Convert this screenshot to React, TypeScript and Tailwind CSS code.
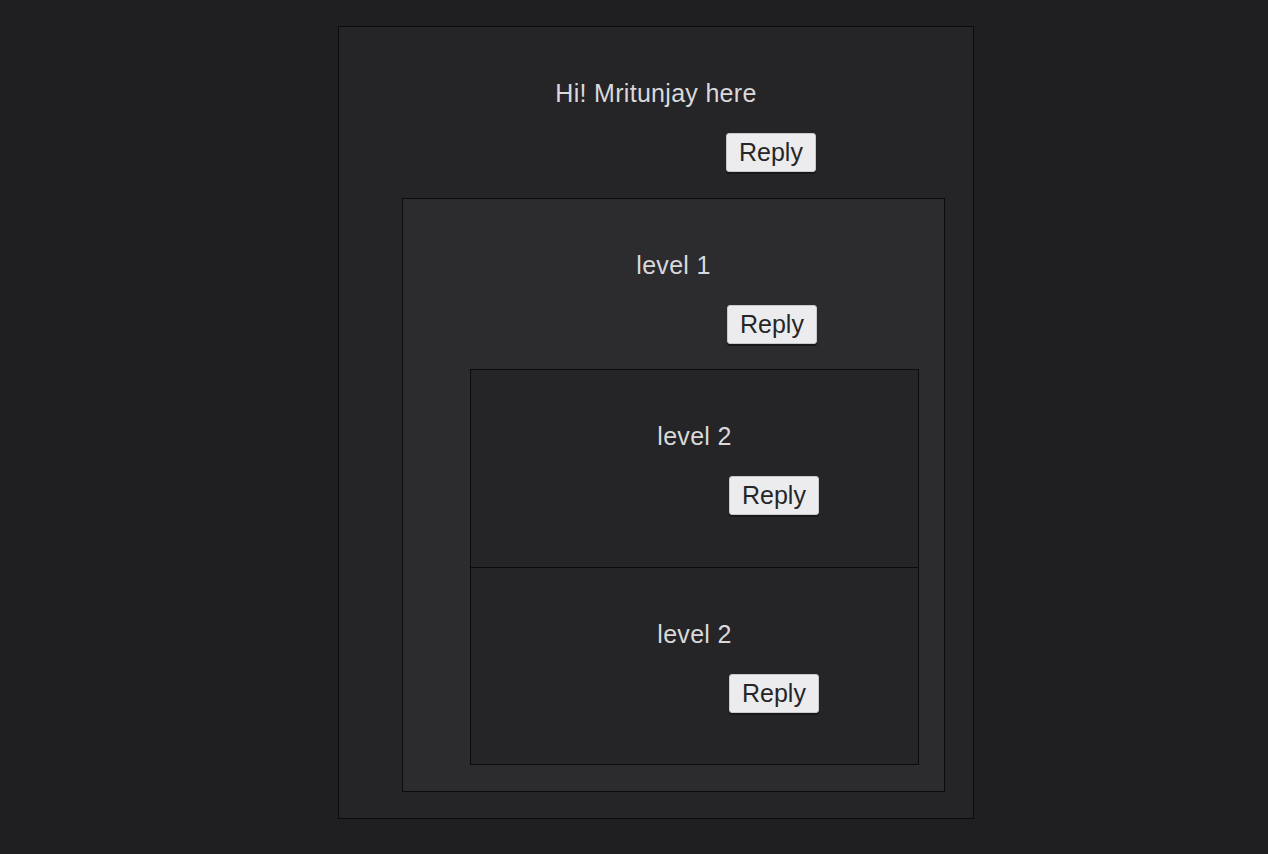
import React from 'react';

interface CommentData {
  text: string;
  replies?: CommentData[];
}

const thread: CommentData = {
  text: 'Hi! Mritunjay here',
  replies: [
    {
      text: 'level 1',
      replies: [{ text: 'level 2' }, { text: 'level 2' }],
    },
  ],
};

// per-depth spacing, taken from the screenshot
const levels = [
  { bg: 'bg-[#252427]', btn: 'ml-[387px]', kids: 'mt-[26px] pl-[63px] pr-[28px]' },
  { bg: 'bg-[#2c2b2e]', btn: 'ml-[324px]', kids: 'mt-[25px] pl-[67px] pr-[25px]' },
  { bg: 'bg-[#252427]', btn: 'ml-[258px]', kids: 'mt-[25px] pl-[64px] pr-[28px]' },
];

function Comment({ data, depth, first }: { data: CommentData; depth: number; first: boolean }) {
  const lv = levels[depth];
  const hasKids = !!data.replies && data.replies.length > 0;
  return (
    <div
      className={`border border-[#0b0b0d] ${lv.bg} pt-[52px] ${
        hasKids ? 'pb-[26px]' : first ? 'pb-[52px]' : 'pb-[51px] border-t-0'
      }`}
    >
      <div className="flex justify-center h-[30px] items-center text-[25px] tracking-[0.3px] text-[#d9d9db]">
        {data.text}
      </div>
      <div className="flex mt-[24px]">
        <button
          className={`${lv.btn} h-[39px] px-[12px] bg-[#ececee] text-[#262628] text-[25px] leading-none rounded-[3px] border border-[#c9c9cc] shadow-[0_2px_0_#18171a]`}
        >
          Reply
        </button>
      </div>
      {hasKids && (
        <div className={lv.kids}>
          {data.replies!.map((r, i) => (
            <Comment key={i} data={r} depth={depth + 1} first={i === 0} />
          ))}
        </div>
      )}
    </div>
  );
}

export default function App() {
  return (
    <div className="min-h-screen bg-[#1f1e21] pt-[26px] font-['Liberation_Sans',Arial,sans-serif]">
      <div className="ml-[338px] w-[636px]">
        <Comment data={thread} depth={0} first />
      </div>
    </div>
  );
}
